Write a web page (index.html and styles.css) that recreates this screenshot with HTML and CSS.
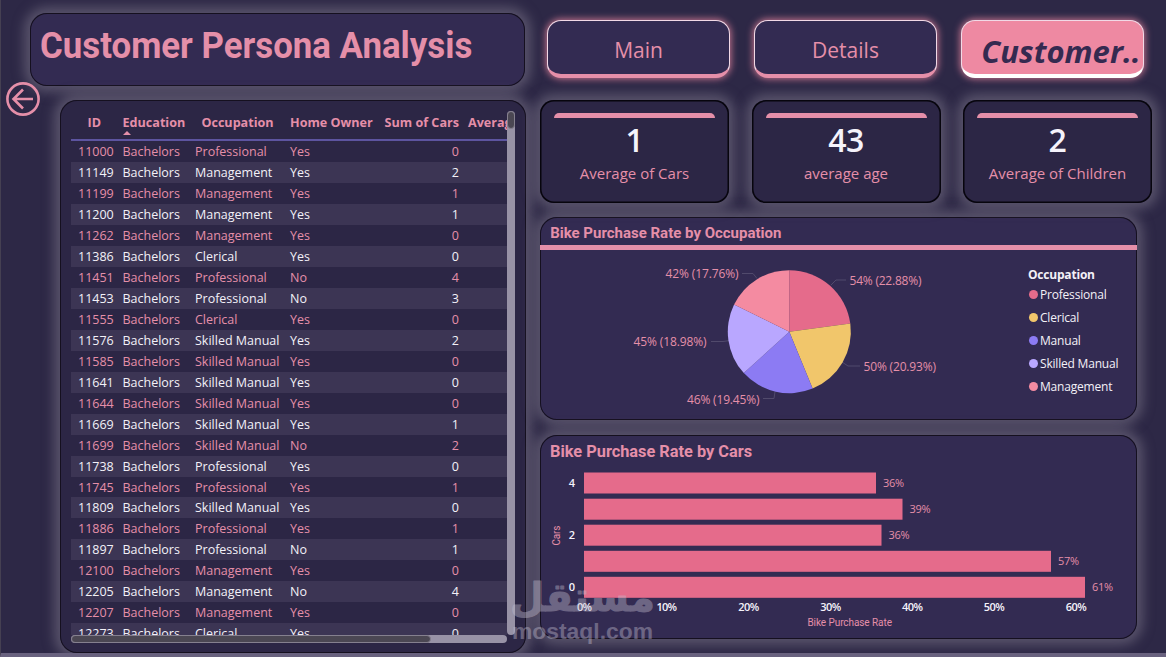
FILE: index.html
```html
<!DOCTYPE html>
<html lang="en">
  <head>
    <meta charset="UTF-8" />
    <meta name="viewport" content="width=device-width, initial-scale=1.0" />
    <title>Customer Persona Analysis</title>
    <link rel="stylesheet" href="styles.css">
  </head>
  <body>
    <div class="dashboard">
      <div class="left-column">
        <header class="title-card">
          <h1>Customer Persona Analysis</h1>
        </header>
        <div class="table-row">
          <a class="back-btn">
            <svg width="34" height="34" viewBox="0 0 34 34">
              <circle cx="17" cy="17" r="15.6" />
              <path d="M27 17H8M17 7.500L7.500 17l9.500 9.500" />
            </svg>
          </a>
          <div class="table-card">
            <div class="table-main">
              <div class="table">
                <div class="row head">
                  <span class="center">ID</span>
                  <span class="sorted">Education</span>
                  <span class="center">Occupation</span>
                  <span>Home Owner</span>
                  <span class="num">Sum of Cars</span>
                  <span>Average</span>
                </div>
                <div id="rows"></div>
              </div>
              <div class="scroll-y"><div class="thumb"></div></div>
            </div>
            <div class="scroll-x"><div class="thumb"></div></div>
          </div>
        </div>
      </div>

      <div class="right-column">
        <nav class="tabs">
          <a class="tab">Main</a>
          <a class="tab">Details</a>
          <a class="tab active">Customer..</a>
        </nav>

        <div class="kpis">
          <div class="kpi"><div class="accent"></div><b>1</b><span>Average of Cars</span></div>
          <div class="kpi"><div class="accent"></div><b>43</b><span>average age</span></div>
          <div class="kpi"><div class="accent"></div><b>2</b><span>Average of Children</span></div>
        </div>

        <!-- Pie chart -->
        <section class="card pie-card">
          <h2 class="pie-title">Bike Purchase Rate by Occupation</h2>
          <div class="pie-body">
            <svg width="488" height="171" viewBox="540 250 488 171">
              <g class="leader">
                <path d="M742 273.500h11l4 5M831 285l5-5h10M842 362l6 4h12M711 341.500h12l7-1M763 398.500h11l1-7" />
              </g>
              <g transform="translate(789.300 331.700)">
                <path fill="#e56b8b" d="M0 0V-61.500A61.500 61.500 0 0 1 61-8.100Z" />
                <path fill="#f1c66b" d="M0 0L61-8.100A61.500 61.500 0 0 1 23.300 56.900Z" />
                <path fill="#8c7bf3" d="M0 0L23.300 56.900A61.500 61.500 0 0 1-45.500 41.400Z" />
                <path fill="#b9a7ff" d="M0 0L-45.500 41.400A61.500 61.500 0 0 1-55.200-27.100Z" />
                <path fill="#f48ba1" d="M0 0L-55.200-27.100A61.500 61.500 0 0 1 0-61.500Z" />
              </g>
              <g class="pie-label">
                <text x="665.500" y="278" textLength="73">42% (17.76%)</text>
                <text x="849.500" y="285" textLength="72">54% (22.88%)</text>
                <text x="633.500" y="346" textLength="73">45% (18.98%)</text>
                <text x="863.500" y="371" textLength="72.500">50% (20.93%)</text>
                <text x="687" y="404" textLength="72.500">46% (19.45%)</text>
              </g>
            </svg>
            <div class="legend">
              <b>Occupation</b>
              <span class="professional">Professional</span>
              <span class="clerical">Clerical</span>
              <span class="manual">Manual</span>
              <span class="skilled">Skilled Manual</span>
              <span class="management">Management</span>
            </div>
          </div>
        </section>

        <!-- Bar chart -->
        <section class="card bar-card">
          <h2 class="bar-title">Bike Purchase Rate by Cars</h2>
          <svg width="597" height="170" viewBox="540 469 597 170">
            <g fill="#e56b8b">
              <rect x="584" y="472.500" width="292" height="21" />
              <rect x="584" y="498.700" width="318.500" height="21" />
              <rect x="584" y="524.700" width="297.500" height="21" />
              <rect x="584" y="550.800" width="467" height="21" />
              <rect x="584" y="576.800" width="501" height="21" />
            </g>
            <g class="bar-label">
              <text x="883" y="487" textLength="21">36%</text>
              <text x="909.500" y="513" textLength="21">39%</text>
              <text x="888.500" y="539" textLength="21">36%</text>
              <text x="1058" y="565" textLength="21">57%</text>
              <text x="1092" y="591" textLength="21">61%</text>
            </g>
            <g class="axis">
              <text x="572" y="487">4</text>
              <text x="572" y="539">2</text>
              <text x="572" y="591">0</text>
              <text x="584.500" y="611" textLength="15">0%</text>
              <text x="666.800" y="611" textLength="20.500">10%</text>
              <text x="748.700" y="611" textLength="21">20%</text>
              <text x="830.700" y="611" textLength="21">30%</text>
              <text x="912.500" y="611" textLength="21">40%</text>
              <text x="994.300" y="611" textLength="21">50%</text>
              <text x="1076.300" y="611" textLength="21">60%</text>
            </g>
            <g class="axis-title">
              <text x="849.700" y="626" textLength="84.500">Bike Purchase Rate</text>
              <text transform="translate(559.500 535.500) rotate(-90)" textLength="20">Cars</text>
            </g>
          </svg>
        </section>
      </div>

      <div class="watermark">
        <svg width="150" height="70" viewBox="508 576 150 70">
          <text class="wm-ar" lang="ar" transform="translate(582.500 611) scale(0.990 1)">مستقل</text>
          <text class="wm-en" x="512" y="639" textLength="141" lengthAdjust="spacingAndGlyphs">mostaql.com</text>
        </svg>
      </div>
    </div>

    <script>
      const customers = [
        [11000, "Professional", "Yes", 0],
        [11149, "Management", "Yes", 2],
        [11199, "Management", "Yes", 1],
        [11200, "Management", "Yes", 1],
        [11262, "Management", "Yes", 0],
        [11386, "Clerical", "Yes", 0],
        [11451, "Professional", "No", 4],
        [11453, "Professional", "No", 3],
        [11555, "Clerical", "Yes", 0],
        [11576, "Skilled Manual", "Yes", 2],
        [11585, "Skilled Manual", "Yes", 0],
        [11641, "Skilled Manual", "Yes", 0],
        [11644, "Skilled Manual", "Yes", 0],
        [11669, "Skilled Manual", "Yes", 1],
        [11699, "Skilled Manual", "No", 2],
        [11738, "Professional", "Yes", 0],
        [11745, "Professional", "Yes", 1],
        [11809, "Skilled Manual", "Yes", 0],
        [11886, "Professional", "Yes", 1],
        [11897, "Professional", "No", 1],
        [12100, "Management", "Yes", 0],
        [12205, "Management", "No", 4],
        [12207, "Management", "Yes", 0],
        [12273, "Clerical", "Yes", 0],
      ];

      document.getElementById("rows").innerHTML = customers
        .map(
          ([id, occupation, owner, cars]) => `<div class="row">
            <span class="id">${id}</span><span>Bachelors</span><span>${occupation}</span>
            <span>${owner}</span><span class="num">${cars}</span><span></span>
          </div>`
        )
        .join("");
    </script>
  </body>
</html>
```
FILE: styles.css
```css
* {
  box-sizing: border-box;
}
body {
  margin: 0;
  height: 657px;
  overflow: hidden;
  background-color: #2d2846;
  color: #e58fa9;
  font-family: "Open Sans", "Noto Sans", sans-serif;
}
h1,
h2 {
  margin: 0;
  font-family: Roboto, sans-serif;
  font-weight: bold;
  white-space: nowrap;
  transform-origin: left center;
}
svg {
  display: block;
}
.dashboard {
  display: flex;
  position: relative;
  height: 657px;
  overflow: hidden;
  border-left: 1px solid #454052;
  border-bottom: 4px solid #69627f;
}
.left-column {
  width: 525px;
  padding-top: 13px;
}
.title-card,
.table-card,
.kpi,
.card {
  background-color: #332b52;
  border-radius: 17px;
  box-shadow: inset 0 0 0 1px #15101f, 0 0 12px 6px rgba(132, 125, 143, 0.5);
}
.title-card {
  height: 73px;
  margin-left: 29px;
  width: 495px;
  padding: 12px 0 0 10px;
}
.title-card h1 {
  font-size: 36px;
  line-height: 43px;
  transform: scaleX(0.967);
}
.table-row {
  display: flex;
  align-items: flex-start;
}
.back-btn {
  position: relative;
  margin: -4px 20px 0 5px;
}
.back-btn svg {
  fill: none;
  stroke: #e58fa9;
  stroke-width: 2.6;
}
.table-card {
  width: 466px;
  height: 553px;
  margin-top: 14px;
  padding: 11px 0 0 11px;
  background-color: #2c2645;
}
.table-main {
  display: flex;
  height: 524px;
}
.table {
  width: 436px;
  overflow: hidden;
  font-size: 12.500px;
}
.row {
  display: grid;
  grid-template-columns: 46.500px 72.500px 95px 92px 86px 80px;
  height: 20.980px;
  line-height: 22.800px;
  white-space: nowrap;
}
.row span {
  padding-left: 5px;
}
.row .num {
  padding: 0 4px 0 0;
  text-align: right;
}
.row .id {
  padding-left: 7px;
}
.row .center {
  padding: 0;
  text-align: center;
}
#rows .row:nth-child(even) {
  background-color: #3c3554;
  color: #f3f1f8;
  font-weight: 500;
}
.row.head {
  height: 30px;
  border-bottom: 2px solid #5d54a0;
  font-size: 12.600px;
  font-weight: bold;
  line-height: 24px;
}
.sorted {
  position: relative;
}
.sorted::after {
  content: "";
  position: absolute;
  left: 5px;
  top: 20px;
  border: 4.500px solid transparent;
  border-top: 0;
  border-bottom-color: #e58fa9;
}
.scroll-y {
  width: 8px;
  border-radius: 4px;
  background-color: #9892a6;
}
.scroll-x {
  width: 436px;
  height: 8px;
  border-radius: 4px;
  background-color: #9892a6;
}
.thumb {
  border: 1px solid #85808f;
  border-radius: 4px;
  background-color: #4b4753;
}
.scroll-y .thumb {
  height: 18px;
}
.scroll-x .thumb {
  width: 360px;
  height: 8px;
}
.right-column {
  width: 614px;
  margin-left: 14px;
  padding-top: 20px;
}
.tabs {
  display: flex;
  gap: 24px;
  margin-left: 7px;
}
.tab {
  width: 183px;
  height: 58px;
  border: 1px solid #f1d9e6;
  border-bottom: 4px solid #e58fa9;
  border-radius: 14px;
  background-color: #332b52;
  box-shadow: 0 0 7px 1px rgba(235, 135, 160, 0.8);
  font-size: 21px;
  line-height: 59px;
  text-align: center;
  white-space: nowrap;
}
.tab.active {
  padding-left: 17px;
  border-bottom-color: #fff;
  background-color: #ee89a2;
  color: #352a50;
  font-size: 31px;
  font-style: italic;
  font-weight: bold;
  line-height: 61px;
}
.kpis {
  display: flex;
  gap: 22.500px;
  margin-top: 22px;
}
.kpi {
  display: flex;
  flex-direction: column;
  align-items: center;
  width: 189px;
  height: 103px;
  padding-top: 13px;
  border-radius: 14px;
  background-color: #2c2645;
  box-shadow: inset 0 0 0 1.500px #07050d, 0 0 12px 6px rgba(132, 125, 143, 0.5);
}
.accent {
  width: 161px;
  height: 5px;
  border-radius: 5px 5px 0 0;
  background-color: #e58fa9;
}
.kpi b {
  margin-top: 2px;
  color: #f5f3fb;
  font-size: 32px;
  font-weight: 600;
  letter-spacing: -0.500px;
  line-height: 40px;
}
.kpi span {
  font-size: 15px;
  line-height: 27px;
}
.card {
  width: 597px;
  overflow: hidden;
}
.pie-card {
  height: 203px;
  margin-top: 14px;
}
.bar-card {
  height: 204px;
  margin-top: 15px;
}
.pie-title {
  height: 28px;
  padding-left: 10.500px;
  font-size: 15.500px;
  line-height: 33px;
  transform: scaleX(0.967);
}
.pie-body {
  display: flex;
  border-top: 5px solid #e58fa9;
  height: 176px;
}
.bar-title {
  height: 34px;
  padding-left: 10.500px;
  font-size: 17px;
  line-height: 33px;
  transform: scaleX(0.96);
}
.leader {
  fill: none;
  stroke: #514a6c;
}
.pie-label {
  fill: #e58fa9;
  font-size: 12px;
}
.legend {
  display: flex;
  flex-direction: column;
  padding-top: 15px;
  color: #f3f1f8;
  font-size: 12px;
  letter-spacing: -0.200px;
}
.legend b {
  height: 17.500px;
  line-height: 20px;
}
.legend span {
  display: flex;
  align-items: center;
  gap: 2px;
  height: 23.200px;
}
.legend span::before {
  content: "";
  width: 9px;
  height: 9px;
  margin-left: 1px;
  border-radius: 50%;
}
.professional::before {
  background-color: #e56b8b;
}
.clerical::before {
  background-color: #f1c66b;
}
.manual::before {
  background-color: #8c7bf3;
}
.skilled::before {
  background-color: #b9a7ff;
}
.management::before {
  background-color: #f48ba1;
}
.bar-label {
  fill: #e58fa9;
  font-size: 11px;
}
.axis {
  fill: #f5f3fb;
  font-size: 11px;
  font-weight: 600;
  text-anchor: middle;
}
.axis-title {
  fill: #e58fa9;
  font-family: Roboto, sans-serif;
  font-size: 10px;
  text-anchor: middle;
}
.watermark {
  position: absolute;
  left: 507px;
  top: 576px;
  opacity: 0.4;
}
.wm-ar {
  fill: #c5bfd0;
  stroke: #c5bfd0;
  stroke-width: 1px;
  stroke-linejoin: round;
  font-family: "DejaVu Sans", sans-serif;
  font-size: 40px;
  font-weight: bold;
  text-anchor: middle;
}
.wm-en {
  fill: #c5bfd0;
  font-family: "Liberation Sans", sans-serif;
  font-size: 22px;
  font-weight: bold;
}
```
